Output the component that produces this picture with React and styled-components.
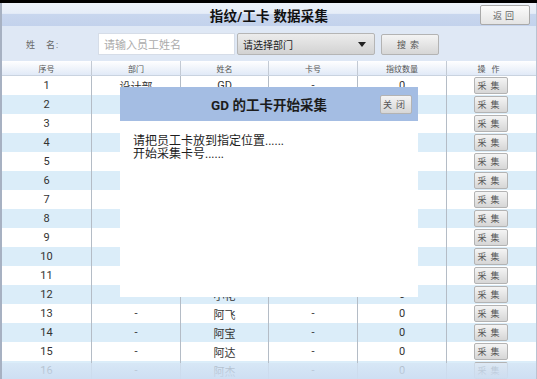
import React from "react";
import styled, { createGlobalStyle } from "styled-components";

const GlobalStyle = createGlobalStyle`
  html, body {
    margin: 0;
    padding: 0;
    background: #000;
  }
  * {
    box-sizing: border-box;
  }
`;

const FONT = `Roboto, "Noto Sans CJK SC", sans-serif`;

const Screen = styled.div`
  position: relative;
  width: 537px;
  height: 379px;
  overflow: hidden;
  padding-top: 3px;
  background: #000;
  font-family: ${FONT};
`;

const Panel = styled.div`
  height: 376px;
  display: flex;
  flex-direction: column;
  background: #dfe8f5;
  border-left: 2px solid #a7b1c2;
  border-right: 1px solid #b9c3d2;
`;

const TitleBar = styled.div`
  position: relative;
  height: 23px;
  display: flex;
  align-items: center;
  justify-content: center;
  background: linear-gradient(to bottom, #edf2fa 0%, #e6edf8 45%, #c8d6ee 50%, #c3d2ec 100%);
`;

const Title = styled.div`
  font-size: 13.5px;
  font-weight: 700;
  color: #111;
  letter-spacing: 0.2px;
`;

const BackButton = styled.div`
  position: absolute;
  right: 6px;
  top: 2px;
  width: 50px;
  height: 20px;
  display: flex;
  align-items: center;
  justify-content: center;
  font-size: 9px;
  color: #666;
  letter-spacing: 3px;
  background: linear-gradient(to bottom, #fbfbfb, #e4e4e4);
  border: 1px solid #a9a9a9;
  border-radius: 2px;
`;

const SearchRow = styled.div`
  height: 34px;
  display: flex;
  align-items: center;
  padding-left: 24px;
  padding-top: 2px;
`;

const Label = styled.div`
  width: 72px;
  font-size: 9px;
  color: #666;
  letter-spacing: 1px;
`;

const Input = styled.div`
  width: 137px;
  height: 22px;
  display: flex;
  align-items: center;
  padding-left: 5px;
  background: #fff;
  border: 1px solid #d6dde8;
  font-size: 11px;
  color: #ababab;
`;

const Select = styled.div`
  width: 138px;
  height: 22px;
  margin-left: 2px;
  display: flex;
  align-items: center;
  justify-content: space-between;
  padding: 0 8px 0 5px;
  font-size: 10px;
  color: #222;
  background: linear-gradient(to bottom, #ececec, #d2d2d2);
  border: 1px solid #b5b5b5;
  border-radius: 2px;
`;

const Arrow = styled.span`
  width: 0;
  height: 0;
  border-left: 4px solid transparent;
  border-right: 4px solid transparent;
  border-top: 5px solid #222;
`;

const GreyButton = styled.div`
  display: flex;
  align-items: center;
  justify-content: center;
  font-size: ${(p) => p.$size || 9}px;
  color: #555;
  letter-spacing: ${(p) => p.$spacing || 4}px;
  background: linear-gradient(to bottom, #f4f4f4, #d6d6d6);
  border: 1px solid #b3b3b3;
  border-radius: 2px;
`;

const SearchButton = styled(GreyButton)`
  width: 58px;
  height: 21px;
  margin-left: 6px;
`;

const Table = styled.div`
  position: relative;
  flex: 1;
  margin-top: 1px;
  overflow: hidden;
  background: #fff;
`;

const Cols = `90px 89px 88px 89px 89px 1fr`;

const HeadRow = styled.div`
  display: grid;
  grid-template-columns: ${Cols};
  height: 15px;
  background: linear-gradient(to bottom, #ffffff, #e1eaf7);
  border-bottom: 1px solid #c9d3e0;
`;

const HeadCell = styled.div`
  display: flex;
  align-items: center;
  justify-content: center;
  font-size: 8px;
  color: #555;
  border-right: 1px solid #c3cad4;
  letter-spacing: ${(p) => p.$spacing || 0}px;
  &:last-child {
    border-right: none;
  }
`;

const Row = styled.div`
  display: grid;
  grid-template-columns: ${Cols};
  height: 19px;
  background: ${(p) => (p.$alt ? "#dbedf9" : "#ffffff")};
`;

const Cell = styled.div`
  display: flex;
  align-items: center;
  justify-content: center;
  font-size: 11px;
  color: #333;
  border-right: 1px solid #b4bcc6;
  &:last-child {
    border-right: none;
  }
`;

const RowButton = styled(GreyButton)`
  width: 34px;
  height: 17px;
  margin-left: -2px;
`;

const BottomFade = styled.div`
  position: absolute;
  left: 0;
  right: 0;
  bottom: 0;
  height: 16px;
  background: linear-gradient(to bottom, rgba(214, 229, 245, 0.75), rgba(205, 222, 242, 0.95));
`;

const Modal = styled.div`
  position: absolute;
  left: 120px;
  top: 87px;
  width: 298px;
  height: 210px;
  background: #fff;
  display: flex;
  flex-direction: column;
`;

const ModalHeader = styled.div`
  position: relative;
  height: 34px;
  display: flex;
  align-items: center;
  justify-content: center;
  background: #a4bde3;
`;

const ModalTitle = styled.div`
  font-size: 13.5px;
  font-weight: 700;
  color: #1c1c1c;
`;

const CloseButton = styled(GreyButton)`
  position: absolute;
  right: 6px;
  top: 8px;
  width: 32px;
  height: 19px;
`;

const ModalBody = styled.div`
  padding: 14px 0 0 13px;
  font-size: 12px;
  line-height: 13px;
  color: #1e1e1e;
`;

// rows 2-11 sit behind the dialog; only their number and button show
const rows = [
  ["1", "设计部", "GD", "-", "0"],
  ["2", "", "", "", ""],
  ["3", "", "", "", ""],
  ["4", "", "", "", ""],
  ["5", "", "", "", ""],
  ["6", "", "", "", ""],
  ["7", "", "", "", ""],
  ["8", "", "", "", ""],
  ["9", "", "", "", ""],
  ["10", "", "", "", ""],
  ["11", "", "", "", ""],
  ["12", "-", "小花", "-", "0"],
  ["13", "-", "阿飞", "-", "0"],
  ["14", "-", "阿宝", "-", "0"],
  ["15", "-", "阿达", "-", "0"],
  ["16", "-", "阿杰", "-", "0"],
];

export default function App() {
  return (
    <>
      <GlobalStyle />
      <Screen>
        <Panel>
          <TitleBar>
            <Title>指纹/工卡 数据采集</Title>
            <BackButton>返回</BackButton>
          </TitleBar>
          <SearchRow>
            <Label>姓　名:</Label>
            <Input>请输入员工姓名</Input>
            <Select>
              请选择部门
              <Arrow />
            </Select>
            <SearchButton>搜索</SearchButton>
          </SearchRow>
          <Table>
            <HeadRow>
              <HeadCell>序号</HeadCell>
              <HeadCell>部门</HeadCell>
              <HeadCell>姓名</HeadCell>
              <HeadCell>卡号</HeadCell>
              <HeadCell>指纹数量</HeadCell>
              <HeadCell $spacing={6}>操作</HeadCell>
            </HeadRow>
            {rows.map((r, i) => (
              <Row key={r[0]} $alt={i % 2 === 1}>
                {r.map((v, j) => (
                  <Cell key={j}>{v}</Cell>
                ))}
                <Cell>
                  <RowButton>采集</RowButton>
                </Cell>
              </Row>
            ))}
            <BottomFade />
          </Table>
        </Panel>
        <Modal>
          <ModalHeader>
            <ModalTitle>GD 的工卡开始采集</ModalTitle>
            <CloseButton>关闭</CloseButton>
          </ModalHeader>
          <ModalBody>
            请把员工卡放到指定位置......
            <br />
            开始采集卡号......
          </ModalBody>
        </Modal>
      </Screen>
    </>
  );
}
